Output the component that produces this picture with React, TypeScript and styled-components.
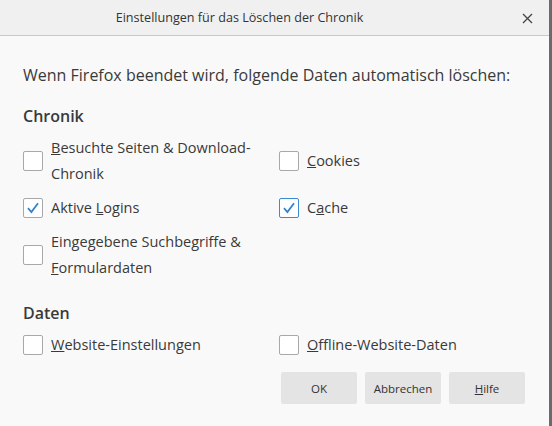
import React from 'react';
import styled, { createGlobalStyle } from 'styled-components';

const GlobalStyle = createGlobalStyle`
  html, body {
    margin: 0;
    padding: 0;
    background: #f9f9f9;
  }
  body {
    font-family: "Open Sans", "Noto Sans", sans-serif;
    color: #3a3a3a;
  }
`;

type Option = {
  lines: React.ReactNode[];
  checked?: boolean;
  focused?: boolean;
};

const chronik: Option[] = [
  { lines: [<><u>B</u>esuchte Seiten &amp; Download-</>, 'Chronik'] },
  { lines: [<><u>C</u>ookies</>] },
  { lines: [<>Aktive <u>L</u>ogins</>], checked: true },
  { lines: [<>C<u>a</u>che</>], checked: true, focused: true },
  { lines: ['Eingegebene Suchbegriffe &', <><u>F</u>ormulardaten</>] },
];

const daten: Option[] = [
  { lines: [<><u>W</u>ebsite-Einstellungen</>] },
  { lines: [<><u>O</u>ffline-Website-Daten</>] },
];

function CheckIcon() {
  return (
    <svg width="14" height="14" viewBox="0 0 14 14">
      <path d="M2 7.2 L5.4 11 L12 2.2" fill="none" stroke="#2f84cc" strokeWidth="1.8" />
    </svg>
  );
}

function CheckRow({ option }: { option: Option }) {
  return (
    <Row>
      <Box $focused={!!option.focused}>{option.checked ? <CheckIcon /> : null}</Box>
      <Label>
        {option.lines.map((line, i) => (
          <span key={i}>
            {line}
            {i < option.lines.length - 1 ? <br /> : null}
          </span>
        ))}
      </Label>
    </Row>
  );
}

function App() {
  return (
    <Window>
      <GlobalStyle />
      <TitleBar>
        <Title>Einstellungen für das Löschen der Chronik</Title>
        <Close>
          <svg width="11" height="11" viewBox="0 0 11 11">
            <path d="M1 1 L10 10 M10 1 L1 10" stroke="#444" strokeWidth="1.3" />
          </svg>
        </Close>
      </TitleBar>
      <Body>
        <Intro>Wenn Firefox beendet wird, folgende Daten automatisch löschen:</Intro>
        <Section>
          <SectionTitle>Chronik</SectionTitle>
          <Grid>
            {chronik.map((o, i) => (
              <CheckRow key={i} option={o} />
            ))}
          </Grid>
        </Section>
        <Section>
          <SectionTitle>Daten</SectionTitle>
          <Grid>
            {daten.map((o, i) => (
              <CheckRow key={i} option={o} />
            ))}
          </Grid>
        </Section>
        <Buttons>
          <Button>OK</Button>
          <Button>Abbrechen</Button>
          <Button>
            <u>H</u>ilfe
          </Button>
        </Buttons>
      </Body>
    </Window>
  );
}

export default App;

const Window = styled.div`
  width: 549px;
  height: 426px;
  border-right: 3px solid #6b6b6b;
  background: #f9f9f9;
  display: flex;
  flex-direction: column;
`;

const TitleBar = styled.div`
  height: 35px;
  padding-right: 70px;
  background: #f0f0f0;
  border-bottom: 1px solid #c9c9c9;
  display: flex;
  align-items: center;
  justify-content: center;
  position: relative;
`;

const Title = styled.div`
  font-size: 12.6px;
  color: #333;
`;

const Close = styled.div`
  position: absolute;
  right: 16px;
  top: 13px;
  width: 11px;
  height: 11px;
  display: flex;
`;

const Body = styled.div`
  padding: 29px 24px 0 23px;
  display: flex;
  flex-direction: column;
`;

const Intro = styled.div`
  font-size: 16px;
  line-height: 20px;
  color: #3a3a3a;
`;

const Section = styled.div`
  display: flex;
  flex-direction: column;
  gap: 8px;
  margin-top: 20px;

  & + & {
    margin-top: 21px;
  }
`;

const SectionTitle = styled.div`
  font-size: 16px;
  font-weight: 600;
  line-height: 22px;
  color: #3a3a3a;
`;

const Grid = styled.div`
  display: grid;
  grid-template-columns: 256px 1fr;
  row-gap: 8px;
`;

const Row = styled.div`
  display: flex;
  align-items: center;
  gap: 8px;
`;

const Box = styled.div<{ $focused: boolean }>`
  width: 18px;
  height: 18px;
  flex: none;
  border: 1px solid ${(p) => (p.$focused ? '#3a8ad4' : '#a8a8a8')};
  border-radius: 2px;
  background: #fff;
  display: flex;
  align-items: center;
  justify-content: center;
`;

const Label = styled.div`
  font-size: 14.5px;
  line-height: 26px;
  color: #3a3a3a;
`;

const Buttons = styled.div`
  display: flex;
  justify-content: flex-end;
  gap: 8px;
  margin-top: 14px;
`;

const Button = styled.button`
  width: 76px;
  height: 32px;
  border: none;
  border-radius: 2px;
  background: #e4e4e4;
  font-family: "Open Sans", "Noto Sans", sans-serif;
  font-size: 11.5px;
  color: #333;
  padding: 0;
`;
